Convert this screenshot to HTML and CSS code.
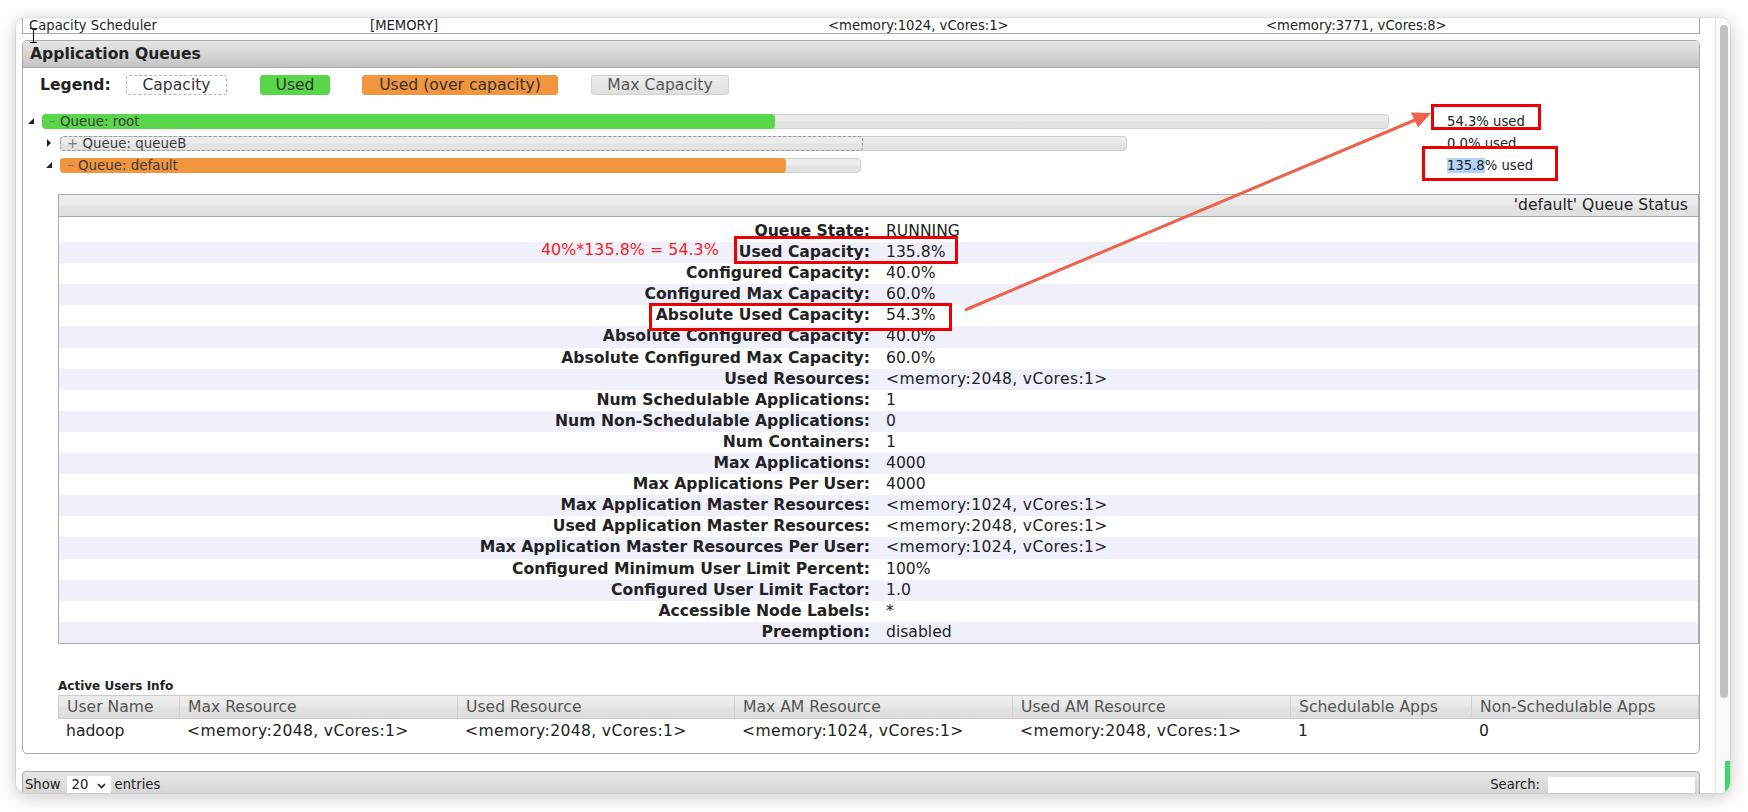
FILE: index.html
```html
<!DOCTYPE html>
<html>
<head>
<meta charset="utf-8">
<title>Application Queues</title>
<link rel="stylesheet" href="styles.css">
</head>
<body>
<div class="desktop">
  <div class="window">
    <div class="page">
      <div class="sched-row">
        <span>Capacity Scheduler</span>
        <span>[MEMORY]</span>
        <span>&lt;memory:1024, vCores:1&gt;</span>
        <span>&lt;memory:3771, vCores:8&gt;</span>
      </div>

      <section class="panel">
        <h3 class="panel-head">Application Queues</h3>
        <div class="panel-body">
          <div class="legend">
            <b class="legend-title">Legend:</b>
            <span class="lg lg-cap">Capacity</span>
            <span class="lg lg-used">Used</span>
            <span class="lg lg-over">Used (over capacity)</span>
            <span class="lg lg-max">Max Capacity</span>
          </div>

          <ul class="qtree">
            <li class="qrow">
              <div class="qcell lvl0">
                <span class="tog"><svg width="6" height="6" viewBox="0 0 6 6"><path d="M6 0 L6 6 L0 6 Z" fill="#222"/></svg></span>
                <span class="qbar" style="width:1347px">
                  <span class="qused" style="width:733px"></span>
                  <span class="qlabel"><i>–</i> Queue: root</span>
                </span>
              </div>
              <span class="qstats">54.3% used</span>
            </li>
            <li class="qrow">
              <div class="qcell lvl1">
                <span class="tog"><svg width="6" height="8" viewBox="0 0 6 8"><path d="M1 0 L5 4 L1 8 Z" fill="#222"/></svg></span>
                <span class="qbar" style="width:1067px">
                  <span class="qcap" style="width:803px"></span>
                  <span class="qlabel"><i>+</i> Queue: queueB</span>
                </span>
              </div>
              <span class="qstats">0.0% used</span>
            </li>
            <li class="qrow">
              <div class="qcell lvl1">
                <span class="tog"><svg width="6" height="6" viewBox="0 0 6 6"><path d="M6 0 L6 6 L0 6 Z" fill="#222"/></svg></span>
                <span class="qbar" style="width:801px">
                  <span class="qcap" style="width:538px"></span>
                  <span class="qused over" style="width:726px"></span>
                  <span class="qlabel"><i>–</i> Queue: default</span>
                </span>
              </div>
              <span class="qstats"><span class="sel">135.8</span>% used</span>
            </li>
          </ul>

          <div class="qinfo">
            <div class="qinfo-head">'default' Queue Status</div>
            <div class="qinfo-body">
              <div class="qi-row"><span class="qi-k">Queue State:</span><span class="qi-v">RUNNING</span></div>
              <div class="qi-row"><span class="qi-k">Used Capacity:</span><span class="qi-v">135.8%</span></div>
              <div class="qi-row"><span class="qi-k">Configured Capacity:</span><span class="qi-v">40.0%</span></div>
              <div class="qi-row"><span class="qi-k">Configured Max Capacity:</span><span class="qi-v">60.0%</span></div>
              <div class="qi-row"><span class="qi-k">Absolute Used Capacity:</span><span class="qi-v">54.3%</span></div>
              <div class="qi-row"><span class="qi-k">Absolute Configured Capacity:</span><span class="qi-v">40.0%</span></div>
              <div class="qi-row"><span class="qi-k">Absolute Configured Max Capacity:</span><span class="qi-v">60.0%</span></div>
              <div class="qi-row"><span class="qi-k">Used Resources:</span><span class="qi-v res">&lt;memory:2048, vCores:1&gt;</span></div>
              <div class="qi-row"><span class="qi-k">Num Schedulable Applications:</span><span class="qi-v">1</span></div>
              <div class="qi-row"><span class="qi-k">Num Non-Schedulable Applications:</span><span class="qi-v">0</span></div>
              <div class="qi-row"><span class="qi-k">Num Containers:</span><span class="qi-v">1</span></div>
              <div class="qi-row"><span class="qi-k">Max Applications:</span><span class="qi-v">4000</span></div>
              <div class="qi-row"><span class="qi-k">Max Applications Per User:</span><span class="qi-v">4000</span></div>
              <div class="qi-row"><span class="qi-k">Max Application Master Resources:</span><span class="qi-v res">&lt;memory:1024, vCores:1&gt;</span></div>
              <div class="qi-row"><span class="qi-k">Used Application Master Resources:</span><span class="qi-v res">&lt;memory:2048, vCores:1&gt;</span></div>
              <div class="qi-row"><span class="qi-k">Max Application Master Resources Per User:</span><span class="qi-v res">&lt;memory:1024, vCores:1&gt;</span></div>
              <div class="qi-row"><span class="qi-k">Configured Minimum User Limit Percent:</span><span class="qi-v">100%</span></div>
              <div class="qi-row"><span class="qi-k">Configured User Limit Factor:</span><span class="qi-v">1.0</span></div>
              <div class="qi-row"><span class="qi-k">Accessible Node Labels:</span><span class="qi-v">*</span></div>
              <div class="qi-row"><span class="qi-k">Preemption:</span><span class="qi-v">disabled</span></div>
            </div>
          </div>

          <h4 class="users-title">Active Users Info</h4>
          <div class="users">
            <div class="u-head">
              <span>User Name</span>
              <span>Max Resource</span>
              <span>Used Resource</span>
              <span>Max AM Resource</span>
              <span>Used AM Resource</span>
              <span>Schedulable Apps</span>
              <span>Non-Schedulable Apps</span>
            </div>
            <div class="u-row">
              <span>hadoop</span>
              <span class="res">&lt;memory:2048, vCores:1&gt;</span>
              <span class="res">&lt;memory:2048, vCores:1&gt;</span>
              <span class="res">&lt;memory:1024, vCores:1&gt;</span>
              <span class="res">&lt;memory:2048, vCores:1&gt;</span>
              <span>1</span>
              <span>0</span>
            </div>
          </div>
        </div>
      </section>

      <div class="dt-bar">
        <div class="dt-len">
          <span class="dt-txt">Show</span>
          <span class="dt-select"><span class="dt-txt">20</span><svg width="9" height="6" viewBox="0 0 9 6"><path d="M1 1 L4.5 4.5 L8 1" fill="none" stroke="#222" stroke-width="1.6"/></svg></span>
          <span class="dt-txt">entries</span>
        </div>
        <div class="dt-search">
          <span class="dt-txt">Search:</span>
          <span class="dt-input"></span>
        </div>
      </div>
    </div>
    <div class="vscroll">
      <div class="thumb"></div>
      <div class="green"></div>
    </div>
  </div>
</div>

<div class="annot">
  <span class="note">40%*135.8% = 54.3%</span>
  <span class="rbox rb1"></span>
  <span class="rbox rb2"></span>
  <span class="rbox rb3"></span>
  <span class="rbox rb4"></span>
  <svg class="arrow" width="1748" height="812" viewBox="0 0 1748 812">
    <line x1="965" y1="310" x2="1415" y2="120" stroke="#ee614b" stroke-width="3"/>
    <polygon points="1431,113 1418,127.5 1411,112.5" fill="#ee614b"/>
  </svg>
  <svg class="ibeam" width="9" height="17" viewBox="0 0 9 17">
    <path d="M1 1.5 H3.5 Q4.5 1.5 4.5 2.5 V14.5 Q4.5 15.5 3.5 15.5 H1 M8 1.5 H5.5 Q4.5 1.5 4.5 2.5 M4.5 14.5 Q4.5 15.5 5.5 15.5 H8" fill="none" stroke="#111" stroke-width="1.1"/>
  </svg>
</div>
</body>
</html>
```

FILE: styles.css
```css
* { box-sizing: border-box; }

html, body {
  margin: 0;
  padding: 0;
}

body {
  width: 1748px;
  height: 812px;
  overflow: hidden;
  position: relative;
  background: #ffffff;
  font-family: "DejaVu Sans", Verdana, sans-serif;
  font-size: 15.6px;
  color: #222;
}

.desktop {
  padding: 18px 18px 0 16px;
}

.window {
  width: 1714px;
  height: 775px;
  display: flex;
  background: #fff;
  border-radius: 10px;
  overflow: hidden;
  box-shadow: 0 3px 18px rgba(0, 0, 0, 0.24), 0 0 0 1px rgba(0, 0, 0, 0.05);
}

.page {
  flex: 1;
  min-width: 0;
  padding: 0 15px 0 6px;
  overflow: hidden;
}

.res {
  letter-spacing: 0.35px;
}

/* ---------- top scheduler row (scrolled, partly hidden) ---------- */
.sched-row {
  height: 16px;
  display: grid;
  grid-template-columns: 341px 458px 438px 1fr;
  border: 1px solid #aaa;
  border-top: 0;
  font-size: 13.2px;
  line-height: 15px;
  color: #222;
}
.sched-row span {
  padding-left: 6px;
  white-space: nowrap;
}

/* ---------- panel ---------- */
.panel {
  margin-top: 6px;
  border: 1px solid #aaa;
  border-radius: 5px;
  background: #fff;
}

.panel-head {
  margin: 0;
  height: 27px;
  padding-left: 7px;
  border-bottom: 1px solid #aaa;
  border-radius: 4px 4px 0 0;
  background: linear-gradient(#e7e7e7, #c4c4c4);
  font-size: 15.6px;
  font-weight: bold;
  line-height: 26px;
  color: #222;
}

.panel-body {
  padding: 7px 0 8px;
}

/* ---------- legend ---------- */
.legend {
  display: flex;
  align-items: center;
  height: 20px;
  padding-left: 17px;
}
.legend-title {
  width: 86px;
  font-weight: bold;
}
.lg {
  height: 20px;
  line-height: 18px;
  border: 1px solid transparent;
  border-radius: 3px;
  text-align: center;
  color: #333;
  white-space: nowrap;
}
.lg-cap {
  width: 101px;
  margin-right: 33px;
  border: 1px dashed #b4b4b4;
}
.lg-used {
  width: 70px;
  margin-right: 32px;
  background: #5ad64a;
  border-color: #5ad64a;
}
.lg-over {
  width: 196px;
  margin-right: 33px;
  background: #f2953f;
  border-color: #f2953f;
}
.lg-max {
  width: 138px;
  background: linear-gradient(#ececec, #e0e0e0);
  border-color: #cfcfcf;
  color: #555;
}

/* ---------- queue tree ---------- */
.qtree {
  list-style: none;
  margin: 15px 0 0;
  padding: 0;
}
.qrow {
  display: grid;
  grid-template-columns: 1424px auto;
  align-items: center;
  height: 22px;
}
.qcell {
  display: flex;
  align-items: center;
}
.qcell.lvl0 { padding-left: 3px; }
.qcell.lvl1 { padding-left: 21px; }

.tog {
  width: 16px;
  flex: none;
  display: flex;
  align-items: center;
  padding-left: 2px;
}
.tog svg { display: block; }

.qbar {
  display: grid;
  height: 15px;
  border: 1px solid #cfcfcf;
  border-radius: 4px;
  background: linear-gradient(#ededed 0%, #ececec 45%, #e3e3e3 55%, #e2e2e2 100%);
}
.qbar > * {
  grid-area: 1 / 1;
  justify-self: start;
}
.qcap {
  margin: -1px;
  border: 1px dashed #9c9c9c;
  border-radius: 4px;
}
.qused {
  margin: -1px 0 -1px -1px;
  border-radius: 4px;
  background: #5ad64a;
}
.qused.over {
  background: #f2953f;
}
.qlabel {
  padding-left: 6px;
  font-size: 13.4px;
  line-height: 13px;
  color: #3c3c3c;
  white-space: nowrap;
}
.qlabel i {
  font-style: normal;
  color: #7a7a7a;
}

.qstats {
  font-size: 13.2px;
  color: #222;
  white-space: nowrap;
}
.sel {
  background: #b3d4fd;
}

/* ---------- queue info table ---------- */
.qinfo {
  margin: 18px 0 0 35px;
  border: 1px solid #aaa;
}
.qinfo-head {
  height: 22px;
  padding-right: 10px;
  border-bottom: 1px solid #aaa;
  background: linear-gradient(#eeeeee 0%, #eaeaea 45%, #e2e2e2 55%, #e0e0e0 100%);
  text-align: right;
  line-height: 21px;
  color: #222;
}
.qinfo-body {
  padding-top: 4px;
}
.qi-row {
  display: grid;
  grid-template-columns: 820px 1fr;
  height: 21.1px;
  line-height: 21.1px;
  white-space: nowrap;
}
.qi-row:nth-child(even) {
  background: #f0f0fd;
}
.qi-k {
  padding-right: 9px;
  text-align: right;
  font-weight: bold;
}
.qi-v {
  padding-left: 7px;
}

/* ---------- active users ---------- */
.users-title {
  margin: 35px 0 2px 35px;
  font-size: 12px;
  line-height: 14px;
  font-weight: bold;
}
.users {
  margin-left: 35px;
}
.u-head,
.u-row {
  display: grid;
  grid-template-columns: 120px 278px 277px 278px 278px 181px 1fr;
  white-space: nowrap;
}
.u-head {
  height: 24px;
  line-height: 22px;
  border: 1px solid #cccccc;
  background: linear-gradient(#ececec 0%, #e9e9e9 45%, #e1e1e1 55%, #dfdfdf 100%);
  color: #555;
}
.u-head span {
  padding-left: 8px;
  border-left: 1px solid #d2d2d2;
}
.u-head span:first-child {
  border-left: 0;
}
.u-row {
  height: 26px;
  line-height: 24px;
}
.u-row span {
  padding-left: 9px;
}
.u-row span:first-child {
  padding-left: 8px;
}

/* ---------- datatable controls ---------- */
.dt-bar {
  margin-top: 17px;
  height: 40px;
  display: flex;
  justify-content: space-between;
  align-items: flex-start;
  padding: 4px 4px 0 2px;
  border: 1px solid #aaa;
  border-radius: 4px 4px 0 0;
  background: linear-gradient(#e6e6e6, #c9c9c9);
  font-size: 13.2px;
  color: #222;
}
.dt-len,
.dt-search {
  display: flex;
  align-items: flex-start;
}
.dt-txt {
  margin-top: 2px;
  line-height: 14px;
  white-space: nowrap;
}
.dt-select {
  width: 44px;
  height: 18px;
  margin: 0 4px 0 6px;
  padding-left: 5px;
  display: flex;
  align-items: flex-start;
  gap: 9px;
  background: #fff;
}
.dt-select svg {
  margin-top: 7px;
}
.dt-input {
  width: 147px;
  height: 20px;
  margin: 1px 0 0 8px;
  background: #fff;
}

/* ---------- scrollbar ---------- */
.vscroll {
  width: 15px;
  flex: none;
  padding-left: 4px;
  border-left: 1px solid #e4e4e4;
  background: #fafafa;
}
.thumb {
  width: 8px;
  height: 673px;
  margin-top: 7px;
  border-radius: 4px;
  background: #c2c2c2;
}
.green {
  width: 5px;
  height: 32px;
  margin: 63px 0 0 5px;
  background: #3fd76a;
}

/* ---------- screenshot annotations (overlay) ---------- */
.annot {
  position: absolute;
  left: 0;
  top: 0;
  width: 1748px;
  height: 812px;
  pointer-events: none;
}
.note {
  position: absolute;
  left: 541px;
  top: 240px;
  font-size: 15.9px;
  line-height: 20px;
  color: #f5221b;
  white-space: nowrap;
}
.rbox {
  position: absolute;
  border: 3px solid #ec0000;
}
.rb1 { left: 734px; top: 236px; width: 224px; height: 28px; }
.rb2 { left: 649px; top: 303px; width: 303px; height: 28px; }
.rb3 { left: 1431px; top: 104px; width: 110px; height: 26px; }
.rb4 { left: 1422px; top: 146px; width: 136px; height: 35px; }

.arrow {
  position: absolute;
  left: 0;
  top: 0;
}
.ibeam {
  position: absolute;
  left: 29px;
  top: 27px;
}
```
